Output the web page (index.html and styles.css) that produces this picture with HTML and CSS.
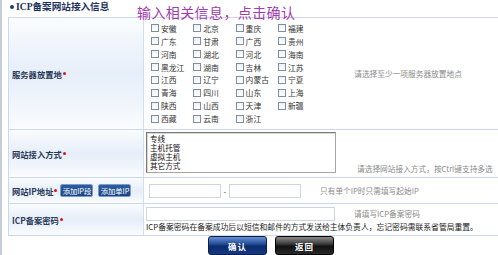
FILE: index.html
```html
<!DOCTYPE html>
<html lang="zh-CN">
<head>
<meta charset="utf-8">
<title>ICP备案网站接入信息</title>
<link rel="stylesheet" href="styles.css">
</head>
<body>
<div class="page">
  <div class="head">
    <span class="dot"></span>
    <span class="title">ICP备案网站接入信息</span>
  </div>
  <div class="note">输入相关信息，点击确认</div>
  <div class="form">
    <div class="row r1">
      <div class="lab">服务器放置地<i class="req"></i></div>
      <div class="val v1">
        <div class="regions">
          <label class="rg"><span class="cb"></span>安徽</label>
          <label class="rg"><span class="cb"></span>北京</label>
          <label class="rg"><span class="cb"></span>重庆</label>
          <label class="rg"><span class="cb"></span>福建</label>
          <label class="rg"><span class="cb"></span>广东</label>
          <label class="rg"><span class="cb"></span>甘肃</label>
          <label class="rg"><span class="cb"></span>广西</label>
          <label class="rg"><span class="cb"></span>贵州</label>
          <label class="rg"><span class="cb"></span>河南</label>
          <label class="rg"><span class="cb"></span>湖北</label>
          <label class="rg"><span class="cb"></span>河北</label>
          <label class="rg"><span class="cb"></span>海南</label>
          <label class="rg"><span class="cb"></span>黑龙江</label>
          <label class="rg"><span class="cb"></span>湖南</label>
          <label class="rg"><span class="cb"></span>吉林</label>
          <label class="rg"><span class="cb"></span>江苏</label>
          <label class="rg"><span class="cb"></span>江西</label>
          <label class="rg"><span class="cb"></span>辽宁</label>
          <label class="rg"><span class="cb"></span>内蒙古</label>
          <label class="rg"><span class="cb"></span>宁夏</label>
          <label class="rg"><span class="cb"></span>青海</label>
          <label class="rg"><span class="cb"></span>四川</label>
          <label class="rg"><span class="cb"></span>山东</label>
          <label class="rg"><span class="cb"></span>上海</label>
          <label class="rg"><span class="cb"></span>陕西</label>
          <label class="rg"><span class="cb"></span>山西</label>
          <label class="rg"><span class="cb"></span>天津</label>
          <label class="rg"><span class="cb"></span>新疆</label>
          <label class="rg"><span class="cb"></span>西藏</label>
          <label class="rg"><span class="cb"></span>云南</label>
          <label class="rg"><span class="cb"></span>浙江</label>
        </div>
        <span class="hint h1">请选择至少一项服务器放置地点</span>
      </div>
    </div>
    <div class="row r2">
      <div class="lab">网站接入方式<i class="req"></i></div>
      <div class="val v2">
        <div class="listbox">
          <div class="opt">专线</div>
          <div class="opt">主机托管</div>
          <div class="opt">虚拟主机</div>
          <div class="opt">其它方式</div>
        </div>
        <span class="hint h2">请选择网站接入方式，按Ctrl键支持多选</span>
      </div>
    </div>
    <div class="row r3">
      <div class="lab">网站IP地址<i class="req"></i>
        <span class="ipbtn first">添加IP段</span>
        <span class="ipbtn">添加单IP</span>
      </div>
      <div class="val v3">
        <span class="inp ip"></span>
        <span class="dash">-</span>
        <span class="inp ip"></span>
        <span class="hint h3">只有单个IP时只需填写起始IP</span>
      </div>
    </div>
    <div class="row r4">
      <div class="lab">ICP备案密码<i class="req"></i></div>
      <div class="val v4">
        <div class="line">
          <span class="inp pwd"></span>
          <span class="hint h4">请填写ICP备案密码</span>
        </div>
        <div class="memo">ICP备案密码在备案成功后以短信和邮件的方式发送给主体负责人，忘记密码需联系省管局重置。</div>
      </div>
    </div>
  </div>
  <div class="btns">
    <span class="btn ok">确认</span>
    <span class="btn back">返回</span>
  </div>
</div>
</body>
</html>
```
FILE: styles.css
```css
* { box-sizing: border-box; margin: 0; padding: 0; }
html, body { background: #fff; }
body {
  width: 498px;
  height: 255px;
  overflow: hidden;
  font-family: "Noto Sans CJK SC", sans-serif;
  font-size: 8px;
  color: #222;
}
.page {
  position: relative;
  height: 255px;
  border-left: 2px solid #c6ccd6;
  padding-left: 6px;
}
.head {
  height: 17px;
  display: flex;
  align-items: center;
  padding-left: 2px;
  padding-bottom: 3px;
}
.dot {
  width: 4px;
  height: 4px;
  border-radius: 50%;
  background: #1f3d6e;
  margin-right: 2px;
}
.title {
  font-family: "Liberation Serif", "Noto Sans CJK SC", serif;
  font-weight: bold;
  font-size: 9.6px;
  line-height: 12px;
  color: #1c3260;
}
.note {
  position: absolute;
  left: 135px;
  top: 4px;
  font-size: 14px;
  line-height: 16px;
  letter-spacing: 0.4px;
  color: #a23bb0;
}
.form {
  border-top: 1px solid #cfd9e6;
  border-left: 1px solid #cad8ea;
}
.row {
  display: flex;
  border-bottom: 1px solid #c9d8eb;
}
.r1 { height: 112px; }
.r2 { height: 48px; }
.r3 { height: 26px; }
.r4 { height: 32px; }
.lab {
  width: 135px;
  flex: none;
  display: flex;
  align-items: center;
  padding-left: 3px;
  border-right: 1px solid #d3deeb;
  font-weight: bold;
  font-size: 8.3px;
  color: #2a3a58;
  background: linear-gradient(to bottom, #fafcfe 0%, #e6eef9 50%, #fafcfe 100%);
  white-space: nowrap;
}
.req {
  display: inline-block;
  width: 3px;
  height: 3px;
  border-radius: 50%;
  background: #e01010;
  margin-left: 1px;
}
.val { flex: 1; display: flex; }
.hint {
  color: #8a8a8a;
  font-size: 7.7px;
  line-height: 10px;
  white-space: nowrap;
}
.v1 { align-items: center; padding-left: 7px; }
.regions {
  display: grid;
  grid-template-columns: repeat(4, 42.3px);
  grid-auto-rows: 12.9px;
}
.rg {
  display: flex;
  align-items: center;
  white-space: nowrap;
  color: #333;
  font-size: 7.8px;
}
.cb {
  width: 8px;
  height: 8px;
  flex: none;
  border: 1px solid #7d8ea3;
  background: linear-gradient(#eef1f5, #fff);
  margin-right: 2px;
}
.h1 { margin-left: 34px; }
.v2 { padding: 2px 0 0 2px; }
.listbox {
  width: 190px;
  height: 41px;
  border: 1px solid #a5a5a5;
  border-top-color: #7a7a7a;
  border-left-color: #7a7a7a;
  box-shadow: inset 1px 1px 0 #d8d8d8;
  padding: 1px 0 0 3px;
  color: #111;
}
.opt {
  height: 9px;
  font-size: 7.6px;
  line-height: 9px;
  overflow: hidden;
}
.h2 { align-self: flex-end; margin: 0 0 3px 21px; }
.ipbtn {
  width: 33px;
  height: 13px;
  display: flex;
  align-items: center;
  justify-content: center;
  background: linear-gradient(#2d5da0, #1a4585);
  border: 1px solid #7c9ccc;
  border-radius: 2px;
  color: #fff;
  font-weight: normal;
  font-size: 7.3px;
  margin-left: 5px;
}
.ipbtn.first { margin-left: 3px; }
.v3 { align-items: center; padding-left: 5px; }
.inp {
  height: 14px;
  border: 1px solid #cdd5de;
  background: #fff;
}
.ip { width: 72px; }
.dash {
  width: 8px;
  text-align: center;
  color: #555;
  line-height: 10px;
  margin-top: 2px;
}
.h3 { margin-left: 19px; }
.v4 { flex-direction: column; padding: 3px 0 0 2px; }
.line { display: flex; align-items: center; }
.pwd { width: 189px; }
.h4 { margin-left: 19px; }
.memo {
  margin-top: 1px;
  line-height: 10px;
  font-size: 7.8px;
  color: #1a1a1a;
  white-space: nowrap;
}
.btns {
  display: flex;
  gap: 8px;
  margin-left: 200px;
}
.btn {
  width: 59px;
  height: 19px;
  border-radius: 3px;
  display: flex;
  align-items: center;
  justify-content: center;
  color: #fff;
  font-weight: bold;
  font-size: 8.5px;
  letter-spacing: 1px;
}
.ok {
  background: linear-gradient(#6a8fd0 0%, #24509a 40%, #0d2b6c 55%, #123a80 100%);
  border: 1px solid #0a1f4e;
}
.back {
  background: linear-gradient(#8c8c8c 0%, #3c3c3c 40%, #111 55%, #2a2a2a 100%);
  border: 1px solid #000;
}
```
